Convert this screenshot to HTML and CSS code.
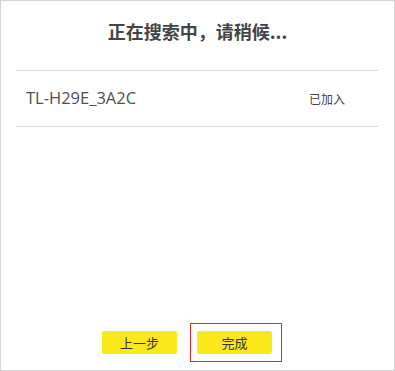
FILE: index.html
```html
<!DOCTYPE html>
<html lang="zh-CN">
<head>
<meta charset="utf-8">
<link rel="stylesheet" href="styles.css">
</head>
<body>
<div class="panel">
  <h1 class="title">正在搜索中，请稍候...</h1>
  <ul class="list">
    <li class="row">
      <span class="name">TL-H29E_3A2C</span>
      <span class="status">已加入</span>
    </li>
  </ul>
  <div class="footer">
    <button class="btn">上一步</button>
    <div class="focus">
      <button class="btn">完成</button>
    </div>
  </div>
</div>
</body>
</html>
```
FILE: styles.css
```css
html, body {
  margin: 0;
  padding: 0;
  background: #fff;
}
.panel {
  box-sizing: border-box;
  width: 395px;
  height: 371px;
  border: 1px solid #d4d4d4;
  display: flex;
  flex-direction: column;
  font-family: "Open Sans", "Noto Sans CJK SC", sans-serif;
}
.title {
  margin: 18px 0 0;
  height: 24px;
  line-height: 24px;
  text-align: center;
  font-size: 18px;
  font-weight: bold;
  color: #444;
  font-family: "Noto Sans CJK SC", sans-serif;
}
.list {
  list-style: none;
  margin: 27px 15px 0;
  padding: 0;
  border-top: 1px solid #dcdcdc;
}
.row {
  height: 55px;
  border-bottom: 1px solid #dcdcdc;
  display: flex;
  align-items: center;
  justify-content: space-between;
  padding: 0 34px 0 10px;
}
.name {
  font-size: 16.5px;
  color: #505050;
  font-family: "Open Sans", sans-serif;
  margin-top: -2px;
}
.status {
  font-size: 12px;
  color: #444;
  font-family: "Noto Sans CJK SC", sans-serif;
}
.footer {
  margin-top: auto;
  padding: 0 0 8px 101px;
  display: flex;
  align-items: center;
  gap: 13px;
}
.btn {
  width: 75px;
  height: 23px;
  border: none;
  border-radius: 2px;
  background: #fbe81c;
  color: #333;
  font-size: 13px;
  font-family: "Noto Sans CJK SC", sans-serif;
  padding: 0;
  line-height: 23px;
}
.focus {
  border: 1px solid #e2252d;
  padding: 7px 9px 7px 6px;
  display: flex;
}
```
